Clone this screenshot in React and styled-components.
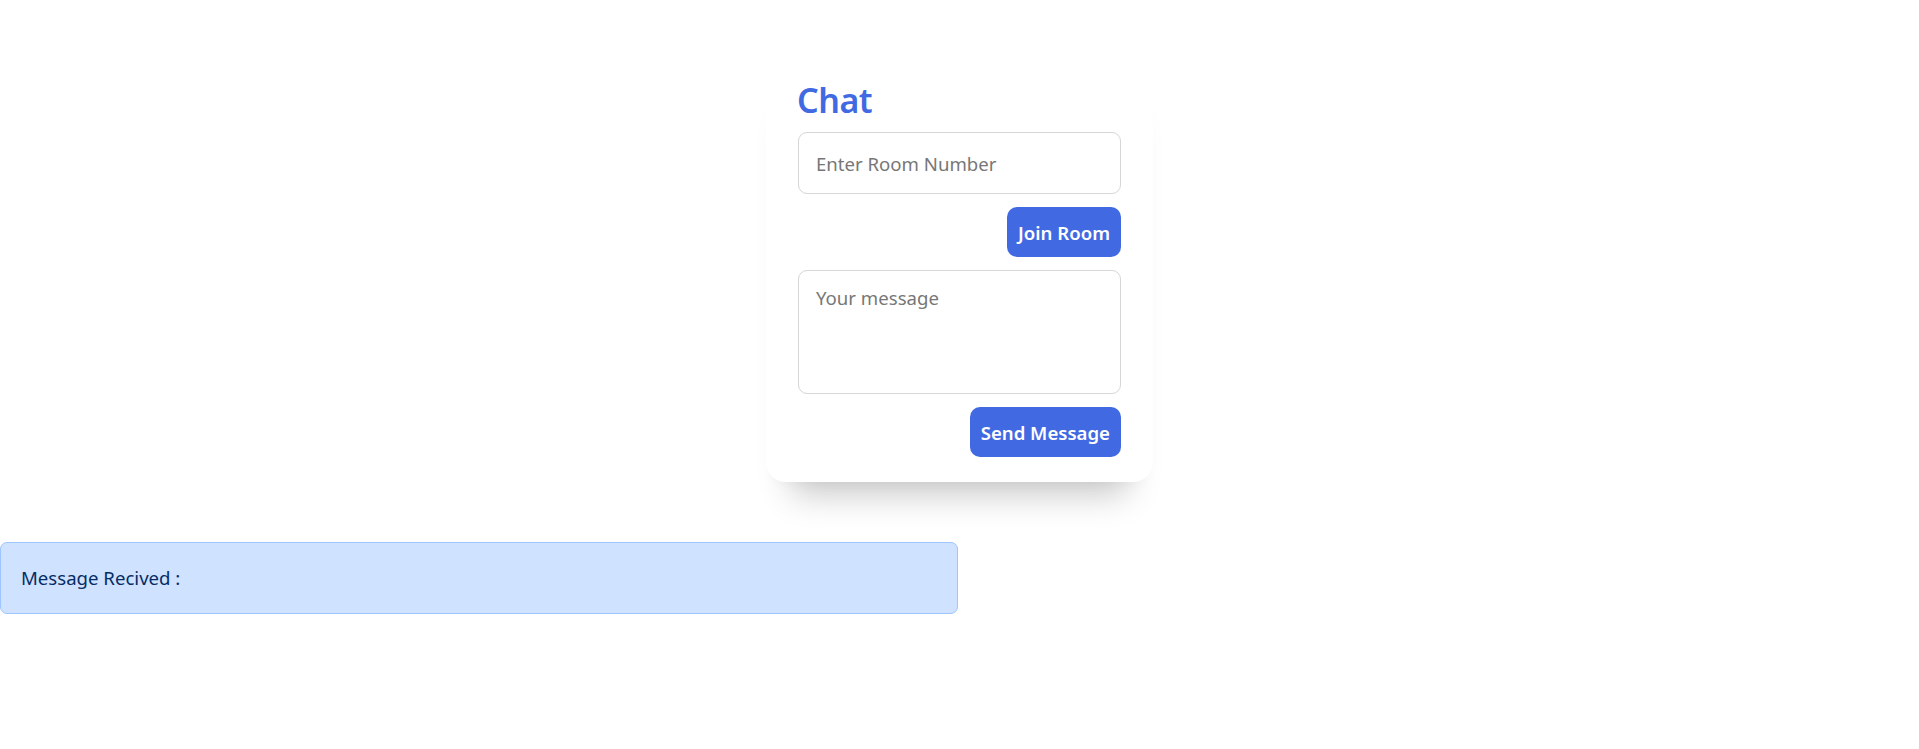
import React, { useState } from "react";
import styled, { createGlobalStyle } from "styled-components";

const GlobalStyle = createGlobalStyle`
  body {
    margin: 0;
    background: #fff;
    font-family: "Segoe UI", "Noto Sans", "Open Sans", sans-serif;
    font-size: 18.6px;
    color: #212529;
  }
  * {
    box-sizing: border-box;
  }
`;

function App() {
  const [room, setRoom] = useState("");
  const [message, setMessage] = useState("");
  const [received] = useState("");

  return (
    <>
      <GlobalStyle />
      <Page>
        <Card>
          <Heading>Chat</Heading>
          <Input
            placeholder="Enter Room Number"
            value={room}
            onChange={(e) => setRoom(e.target.value)}
          />
          <Actions>
            <Button>Join Room</Button>
          </Actions>
          <TextArea
            placeholder="Your message"
            value={message}
            onChange={(e) => setMessage(e.target.value)}
          />
          <Actions>
            <Button>Send Message</Button>
          </Actions>
        </Card>
        <Alert>Message Recived : {received}</Alert>
      </Page>
    </>
  );
}

export default App;

const Page = styled.div`
  padding-top: 53px;
`;

const Card = styled.div`
  width: 387px;
  margin: 0 auto;
  padding: 25px 32px;
  background: #fff;
  border-radius: 20px;
  box-shadow: 0 38px 32px -26px rgba(0, 0, 0, 0.22),
    0 10px 14px -8px rgba(0, 0, 0, 0.03);
  display: flex;
  flex-direction: column;
  gap: 13px;
`;

const Heading = styled.h1`
  margin: 0 0 -3px -1px;
  color: #4169e1;
  font-size: 34px;
  font-weight: 600;
  line-height: 44px;
  letter-spacing: -0.5px;
`;

const Input = styled.input`
  width: 100%;
  height: 62px;
  padding: 15px 17px;
  border: 1px solid #d6d6d6;
  border-radius: 9px;
  font: inherit;
  color: #212529;
  outline: none;

  &::placeholder {
    color: #777;
  }
`;

const TextArea = styled.textarea`
  width: 100%;
  height: 124px;
  padding: 12px 17px;
  border: 1px solid #d6d6d6;
  border-radius: 9px;
  font: inherit;
  line-height: 30px;
  color: #212529;
  resize: none;
  outline: none;

  &::placeholder {
    color: #777;
  }
`;

const Actions = styled.div`
  display: flex;
  justify-content: flex-end;
`;

const Button = styled.button`
  height: 50px;
  padding: 0 11px;
  border: none;
  border-radius: 10px;
  background: #4169e1;
  color: #fff;
  font: inherit;
  font-weight: 600;
  cursor: pointer;
`;

const Alert = styled.div`
  width: 958px;
  margin-top: 60px;
  padding: 20px;
  background: #cfe2ff;
  border: 1px solid #9ec5fe;
  border-radius: 7px;
  color: #052c65;
  line-height: 30px;
`;
